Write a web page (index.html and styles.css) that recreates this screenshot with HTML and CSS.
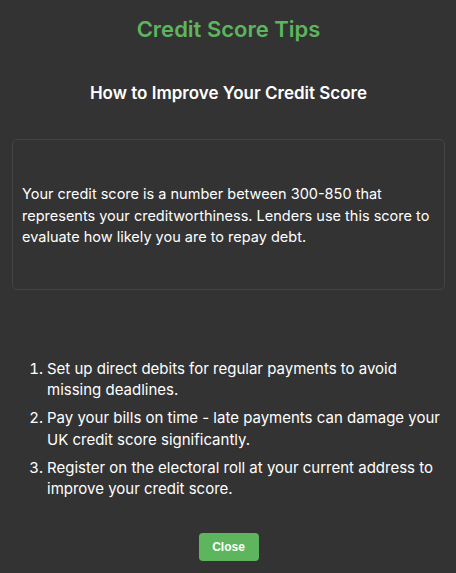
FILE: index.html
```html
<!DOCTYPE html>
<html lang="en">

<head>
    <meta charset="UTF-8">
    <meta name="viewport" content="width=device-width, initial-scale=1.0">
    <title>Credit Score Tips</title>
    <link rel="stylesheet" href="styles.css">
</head>

<body>

    <div class="container">
        <h1>Credit Score Tips</h1>
        <h2>How to Improve Your Credit Score</h2>

        <div class="intro">
            <p>Your credit score is a number between 300-850 that represents your creditworthiness. Lenders use this score to evaluate how likely you are to repay debt.</p>
        </div>

        <ol class="tips">
            <li>Set up direct debits for regular payments to avoid missing deadlines.</li>
            <li>Pay your bills on time - late payments can damage your UK credit score significantly.</li>
            <li>Register on the electoral roll at your current address to improve your credit score.</li>
        </ol>

        <div class="actions">
            <button class="btn">Close</button>
        </div>
    </div>

</body>

</html>
```

FILE: styles.css
```css
body {
    margin: 0;
    background-color: #333333;
    color: #ffffff;
    font-family: Inter, "Open Sans", sans-serif;
}

.container {
    padding: 0 11px 0 12px;
}

h1 {
    margin: 14px 0 0;
    font-size: 22px;
    line-height: 30px;
    font-weight: 600;
    color: #5db55d;
    text-align: center;
}

h2 {
    margin: 37px 0 0;
    font-size: 17px;
    line-height: 24px;
    font-weight: 600;
    text-align: center;
}

.intro {
    margin-top: 34px;
    border: 1px solid #444444;
    border-radius: 5px;
    padding: 43px 9px 41px;
}

.intro p {
    margin: 0;
    font-size: 14.5px;
    line-height: 21.5px;
}

.tips {
    margin: 68px 0 0;
    padding-left: 35px;
    font-size: 15px;
    line-height: 21.5px;
}

.tips li {
    margin-bottom: 6.5px;
}

.actions {
    display: flex;
    justify-content: center;
    margin-top: 33px;
}

.btn {
    width: 60px;
    height: 28px;
    padding: 0;
    border: none;
    border-radius: 4px;
    background-color: #5db55d;
    color: white;
    font-family: "Liberation Sans", Arial, sans-serif;
    font-size: 12px;
    font-weight: bold;
    cursor: pointer;
}
```
